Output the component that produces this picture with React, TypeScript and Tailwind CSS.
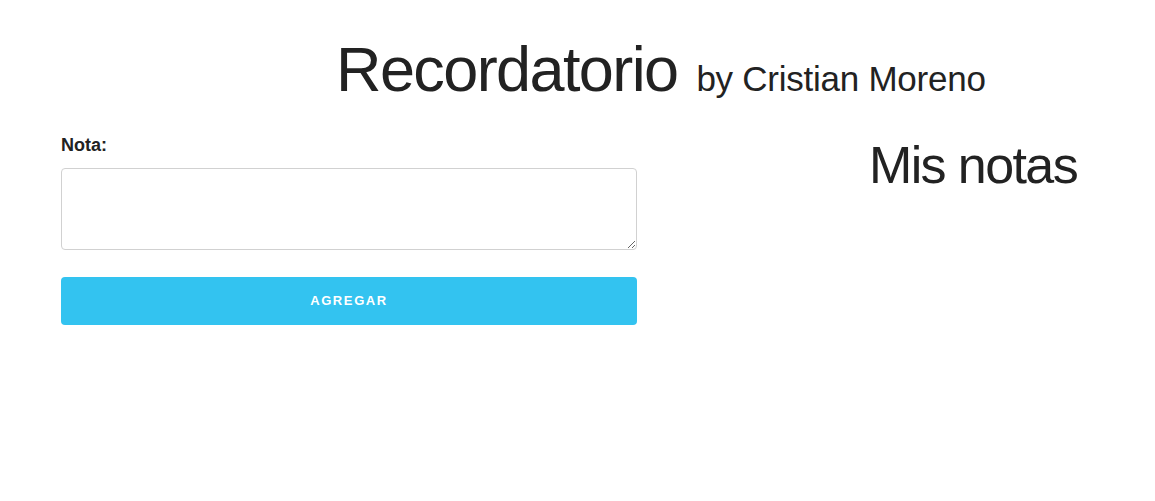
import React, { useState } from "react";

export default function App() {
    const [note, setNote] = useState("");

    return (
        <div className="min-h-[501px] bg-white text-[#222] font-['Liberation_Sans',Arial,sans-serif]">
            {/* Header */}
            <h1 className="pt-[38px] pl-[336px] leading-none text-[63px] font-normal tracking-[-1.6px] whitespace-nowrap">
                Recordatorio <small className="ml-[3px] text-[35px] tracking-[-0.25px]">by Cristian Moreno</small>
            </h1>

            {/* Content */}
            <div className="flex pl-[61px] mt-[23px]">
                {/* Form */}
                <div className="w-[576px] shrink-0 pt-[12px]">
                    <label className="block text-[18px] font-bold leading-none mb-[14px]">Nota:</label>
                    <textarea
                        value={note}
                        onChange={(e) => setNote(e.target.value)}
                        className="block w-full h-[82px] px-[10px] py-[6px] border border-[#d1d1d1] rounded-[4px] bg-white outline-none"
                    />
                    <button className="mt-[27px] w-full h-[48px] rounded-[4px] bg-[#33c3f0] text-white text-[13px] font-bold uppercase tracking-[1.6px]">
                        Agregar
                    </button>
                </div>

                {/* Notes list */}
                <div className="ml-[186px] w-[300px] shrink-0 text-center">
                    <h2 className="pt-[15px] text-[52px] leading-none font-normal tracking-[-1.6px]">Mis notas</h2>
                </div>
            </div>
        </div>
    );
}
